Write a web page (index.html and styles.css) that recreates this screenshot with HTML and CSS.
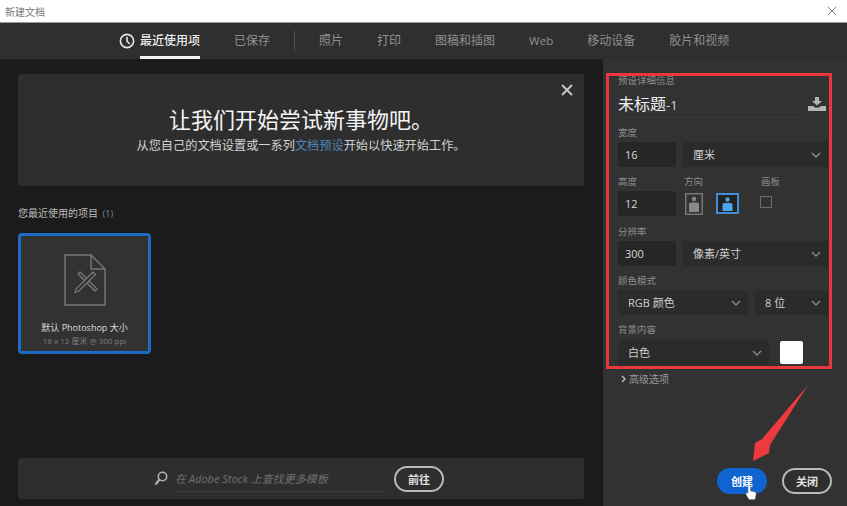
FILE: index.html
```html
<!DOCTYPE html>
<html>
<head>
    <meta charset="utf-8" />
    <title>新建文档</title>
    <link rel="stylesheet" href="styles.css">
</head>
<body>
    <div class="doc-window">
        <div class="doc-titlebar">
            <span class="doc-titlebar-text">新建文档</span>
            <svg class="doc-titlebar-close" width="10" height="10" viewBox="0 0 10 10"><path d="M1 1L9 9M9 1L1 9" stroke="#777" stroke-width="1" fill="none"/></svg>
        </div>

        <div class="doc-tabs">
            <svg class="doc-tabs-clock" width="16" height="16" viewBox="0 0 16 16"><circle cx="8" cy="8" r="6.6" stroke="#e6e6e6" stroke-width="1.6" fill="none"/><path d="M8 3.8V8.2L10.8 11" stroke="#e6e6e6" stroke-width="1.6" fill="none"/></svg>
            <div class="doc-tab doc-tab-active">最近使用项</div>
            <div class="doc-tab">已保存</div>
            <div class="doc-tabs-sep"></div>
            <div class="doc-tab">照片</div>
            <div class="doc-tab">打印</div>
            <div class="doc-tab">图稿和插图</div>
            <div class="doc-tab doc-tab-latin">Web</div>
            <div class="doc-tab">移动设备</div>
            <div class="doc-tab">胶片和视频</div>
        </div>

        <div class="doc-main">
            <div class="doc-left">
                <div class="doc-hero">
                    <h1 class="doc-hero-h1">让我们开始尝试新事物吧。</h1>
                    <p class="doc-hero-p">从您自己的文档设置或一系列<span class="doc-hero-link">文档预设</span>开始以快速开始工作。</p>
                    <svg class="doc-hero-close" width="12" height="12" viewBox="0 0 12 12"><path d="M1 1L11 11M11 1L1 11" stroke="#c4c4c4" stroke-width="2" fill="none"/></svg>
                </div>

                <div class="doc-recent-title">您最近使用的项目 <span class="doc-recent-count">(1)</span></div>

                <div class="doc-card">
                    <svg class="doc-card-icon" width="42" height="52" viewBox="0 0 42 52">
                        <path d="M1 1H27L41 15V51H1Z M27 1V15H41" stroke="#777" stroke-width="1.4" fill="none"/>
                        <path d="M14 20L31 37L33 35L16 18Z" stroke="#777" stroke-width="1.3" fill="none"/>
                        <path d="M29 18L31.500 20.500L15 37L11 38.500L12.500 34.500Z" stroke="#777" stroke-width="1.3" fill="#323232"/>
                    </svg>
                    <div class="doc-card-name">默认 Photoshop 大小</div>
                    <div class="doc-card-size">16 x 12 厘米 @ 300 ppi</div>
                </div>

                <div class="doc-stock">
                    <svg width="14" height="15" viewBox="0 0 14 15"><circle cx="8.5" cy="5.5" r="4.2" stroke="#b0b0b0" stroke-width="1.6" fill="none"/><path d="M5.5 8.5L1.5 13.5" stroke="#b0b0b0" stroke-width="2.2"/></svg>
                    <div class="doc-stock-input">在 Adobe Stock 上查找更多模板</div>
                    <button class="doc-btn doc-btn-outline doc-stock-btn">前往</button>
                </div>
            </div>

            <div class="doc-panel">
                <div class="doc-label doc-label-first">预设详细信息</div>
                <div class="doc-name-row">
                    <div class="doc-name">未标题<span class="doc-name-num">-1</span></div>
                    <svg class="doc-name-save" width="18" height="14" viewBox="0 0 18 14"><path d="M7 0H11V4H14L9 8.5L4 4H7Z" fill="#b5b5b5"/><path d="M0 9H5L7 10.5H11L13 9H18V14H0Z" fill="#b5b5b5"/></svg>
                </div>

                <div class="doc-label">宽度</div>
                <div class="doc-row">
                    <div class="doc-input">16</div>
                    <div class="doc-select doc-grow">厘米<svg class="doc-chevron" width="10" height="6" viewBox="0 0 10 6"><path d="M1 1L5 5L9 1" stroke="#8a8a8a" stroke-width="1.4" fill="none"/></svg></div>
                </div>

                <div class="doc-orient-labels">
                    <div class="doc-label doc-w-height">高度</div>
                    <div class="doc-label doc-w-orient">方向</div>
                    <div class="doc-label">画板</div>
                </div>
                <div class="doc-row doc-row-orient">
                    <div class="doc-input">12</div>
                    <svg class="doc-portrait" width="18" height="22" viewBox="0 0 18 22"><rect x="0.75" y="0.75" width="16.5" height="20.5" stroke="#777" stroke-width="1.5" fill="none"/><circle cx="9" cy="6" r="2.2" fill="#8a8a8a"/><path d="M4 19V11Q4 9.5 6 9.5H12Q14 9.5 14 11V19Z" fill="#8a8a8a"/></svg>
                    <svg class="doc-landscape" width="23" height="21" viewBox="0 0 23 21"><rect x="1" y="1" width="21" height="19" stroke="#3f8fd8" stroke-width="2" fill="#222"/><circle cx="11.5" cy="6.500" r="2.200" fill="#4aa3ee"/><path d="M6.500 18V12Q6.500 10 8.500 10H14.500Q16.500 10 16.500 12V18Z" fill="#4aa3ee"/></svg>
                    <div class="doc-checkbox"></div>
                </div>

                <div class="doc-label doc-label-res">分辨率</div>
                <div class="doc-row">
                    <div class="doc-input">300</div>
                    <div class="doc-select doc-grow">像素/英寸<svg class="doc-chevron" width="10" height="6" viewBox="0 0 10 6"><path d="M1 1L5 5L9 1" stroke="#8a8a8a" stroke-width="1.4" fill="none"/></svg></div>
                </div>

                <div class="doc-label">颜色模式</div>
                <div class="doc-row">
                    <div class="doc-select doc-grow doc-select-short">RGB 颜色<svg class="doc-chevron" width="10" height="6" viewBox="0 0 10 6"><path d="M1 1L5 5L9 1" stroke="#8a8a8a" stroke-width="1.4" fill="none"/></svg></div>
                    <div class="doc-select doc-bits">8 位<svg class="doc-chevron" width="10" height="6" viewBox="0 0 10 6"><path d="M1 1L5 5L9 1" stroke="#8a8a8a" stroke-width="1.4" fill="none"/></svg></div>
                </div>

                <div class="doc-label">背景内容</div>
                <div class="doc-row doc-row-bg">
                    <div class="doc-select doc-bg-select">白色<svg class="doc-chevron" width="10" height="6" viewBox="0 0 10 6"><path d="M1 1L5 5L9 1" stroke="#8a8a8a" stroke-width="1.4" fill="none"/></svg></div>
                    <div class="doc-swatch"></div>
                </div>

                <div class="doc-advanced">
                    <svg width="5" height="8" viewBox="0 0 5 8"><path d="M1 1L4 4L1 7" stroke="#c0c0c0" stroke-width="1.4" fill="none"/></svg>
                    高级选项
                </div>

                <div class="doc-actions">
                    <button class="doc-btn doc-btn-blue">创建</button>
                    <button class="doc-btn doc-btn-outline">关闭</button>
                </div>
            </div>
        </div>

        <div class="doc-redbox"></div>

        <svg class="doc-arrow" width="58" height="79" viewBox="0 0 58 79"><path d="M56 1L18 61L17 69L1 77L3 59L10 55Z" fill="#ee3a3f"/></svg>

        <svg class="doc-hand" width="12" height="15" viewBox="0 0 12 15"><path d="M3 1Q4.500 0 5.500 1V6L10 7Q11.500 8 11 10L10 14.500H4L0.800 9Q0.500 7.500 3 8Z" fill="#fff" stroke="#777" stroke-width="0.5"/></svg>
    </div>
</body>
</html>
```
FILE: styles.css
```css
body {
    margin: 0;
    padding: 0;
    background-color: #1b1b1b;
    font-family: "Open Sans", "Noto Sans CJK SC", sans-serif;
    overflow: hidden;
}

.doc-window {
    position: relative;
    width: 847px;
    height: 506px;
    display: flex;
    flex-direction: column;
}

.doc-titlebar {
    height: 22px;
    background-color: #FFFFFF;
    border-bottom: 1px solid #9a9a9a;
    display: flex;
    align-items: center;
    justify-content: space-between;
    padding: 0 10px 0 5px;
    flex-shrink: 0;
}

.doc-titlebar-text {
    font-size: 10px;
    color: #777;
}

.doc-tabs {
    height: 36px;
    background-color: #2f2f2f;
    display: flex;
    align-items: center;
    padding-left: 119px;
    gap: 34px;
    flex-shrink: 0;
}

.doc-tabs-clock {
    margin-right: -29px;
}

.doc-tab {
    font-size: 12px;
    color: #8f8f8f;
    line-height: 36px;
    height: 36px;
    white-space: nowrap;
}

.doc-tab-latin {
    font-size: 11.5px;
}

.doc-tab-active {
    color: #ececec;
    font-weight: 500;
    height: 33px;
    border-bottom: 3px solid #f2f2f2;
}

.doc-tabs-sep {
    width: 1px;
    height: 20px;
    background-color: #555;
    margin: 0 -10px;
}

.doc-main {
    flex: 1;
    display: flex;
    min-height: 0;
}

.doc-left {
    width: 603px;
    padding: 15px 19px 7px 18px;
    box-sizing: border-box;
    display: flex;
    flex-direction: column;
    background-color: #1b1b1b;
}

.doc-hero {
    position: relative;
    height: 112px;
    flex-shrink: 0;
    background-color: #2e2e2e;
    border-radius: 3px;
    text-align: center;
    padding-top: 30px;
    box-sizing: border-box;
}

.doc-hero-h1 {
    margin: 0;
    font-size: 22px;
    line-height: 30px;
    font-weight: 400;
    color: #f4f4f4;
}

.doc-hero-p {
    margin: 3px 0 0;
    font-size: 12.2px;
    line-height: 17px;
    color: #d2d2d2;
}

.doc-hero-link {
    color: #4f86bd;
}

.doc-hero-close {
    position: absolute;
    top: 10px;
    right: 11px;
}

.doc-recent-title {
    margin-top: 20px;
    font-size: 10px;
    line-height: 14px;
    color: #bdbdbd;
}

.doc-recent-count {
    color: #888;
    font-size: 9px;
    margin-left: 2px;
}

.doc-card {
    margin-top: 12px;
    width: 133px;
    height: 121px;
    box-sizing: border-box;
    border: 3px solid #1c6cc6;
    border-radius: 4px;
    background-color: #323232;
    display: flex;
    flex-direction: column;
    align-items: center;
    padding-top: 18px;
    flex-shrink: 0;
}

.doc-card-name {
    margin-top: 15px;
    font-size: 9px;
    line-height: 13px;
    color: #dcdcdc;
}

.doc-card-size {
    margin-top: 1px;
    font-size: 8px;
    line-height: 12px;
    color: #7c7c7c;
}

.doc-stock {
    margin-top: auto;
    height: 41px;
    flex-shrink: 0;
    background-color: #2e2e2e;
    border-radius: 3px;
    display: flex;
    align-items: center;
    padding-left: 136px;
    box-sizing: border-box;
}

.doc-stock-input {
    width: 212px;
    margin-left: 7px;
    height: 25px;
    line-height: 25px;
    font-size: 11px;
    font-style: italic;
    color: #6f6f6f;
    border-bottom: 1px solid #3a3a3a;
    margin-top: 1px;
    white-space: nowrap;
}

.doc-stock-btn {
    margin-left: 7px;
}

.doc-panel {
    flex: 1;
    background-color: #323232;
    padding: 15px 19px 12px 15px;
    display: flex;
    flex-direction: column;
    min-width: 0;
}

.doc-label {
    font-size: 9.5px;
    line-height: 13px;
    height: 13px;
    color: #8d8d8d;
    margin-top: 8px;
    white-space: nowrap;
}

.doc-label-first {
    margin-top: 0;
}

.doc-label-res {
    margin-top: 9px;
}

.doc-name-row {
    display: flex;
    align-items: center;
    justify-content: space-between;
    height: 28px;
    margin-top: 3px;
}

.doc-name {
    flex: 1;
    height: 28px;
    line-height: 28px;
    box-sizing: border-box;
    border-bottom: 1px solid #3a3a3a;
    font-size: 16px;
    color: #efefef;
}

.doc-name-num {
    font-size: 13px;
    color: #d8d8d8;
}

.doc-name-save {
    margin: 0 2px 0 8px;
}

.doc-row {
    display: flex;
    gap: 7px;
    height: 25px;
    margin-top: 3px;
    align-items: center;
}

.doc-input {
    width: 58px;
    height: 25px;
    line-height: 25px;
    box-sizing: border-box;
    padding-left: 7px;
    background-color: #262626;
    border-radius: 2px;
    font-size: 11px;
    color: #d8d8d8;
    flex-shrink: 0;
}

.doc-select {
    position: relative;
    height: 25px;
    line-height: 25px;
    box-sizing: border-box;
    padding-left: 10px;
    background-color: #2b2b2b;
    border-radius: 2px;
    font-size: 11px;
    color: #cfcfcf;
    white-space: nowrap;
}

.doc-grow {
    flex: 1;
}

.doc-bits {
    width: 73px;
    flex-shrink: 0;
}

.doc-bg-select {
    width: 151px;
    flex-shrink: 0;
}

.doc-chevron {
    position: absolute;
    right: 7px;
    top: 10px;
}

.doc-orient-labels {
    display: flex;
}

.doc-w-height {
    width: 66px;
}

.doc-w-orient {
    width: 77px;
}

.doc-portrait {
    margin-left: 2px;
}

.doc-landscape {
    margin-left: 6px;
}

.doc-checkbox {
    width: 10px;
    height: 10px;
    border: 1.5px solid #6f6f6f;
    margin: -3px 0 0 14px;
}

.doc-row-bg {
    height: 26px;
    gap: 11px;
}

.doc-swatch {
    width: 23px;
    height: 23px;
    background-color: #FFFFFF;
    border-radius: 2px;
}

.doc-advanced {
    margin: 7px 0 0 3px;
    font-size: 10px;
    line-height: 14px;
    color: #9a9a9a;
    display: flex;
    align-items: center;
    gap: 3px;
}

.doc-actions {
    margin-top: auto;
    display: flex;
    justify-content: flex-end;
    gap: 15px;
    margin-right: -4px;
}

.doc-btn {
    width: 50px;
    height: 26px;
    border-radius: 13px;
    font-family: inherit;
    font-size: 11px;
    font-weight: 700;
    padding: 0;
}

.doc-btn-blue {
    background-color: #0f64d2;
    border: none;
    color: #FFFFFF;
}

.doc-btn-outline {
    background-color: #2e2e2e;
    border: 2px solid #b9b9b9;
    color: #e2e2e2;
}

/* annotations drawn over the screenshot */
.doc-redbox {
    position: absolute;
    left: 606px;
    top: 73px;
    width: 220px;
    height: 290px;
    border: 3px solid #e8383d;
}

.doc-arrow {
    position: absolute;
    left: 752px;
    top: 384px;
}

.doc-hand {
    position: absolute;
    left: 745px;
    top: 485px;
}
```
